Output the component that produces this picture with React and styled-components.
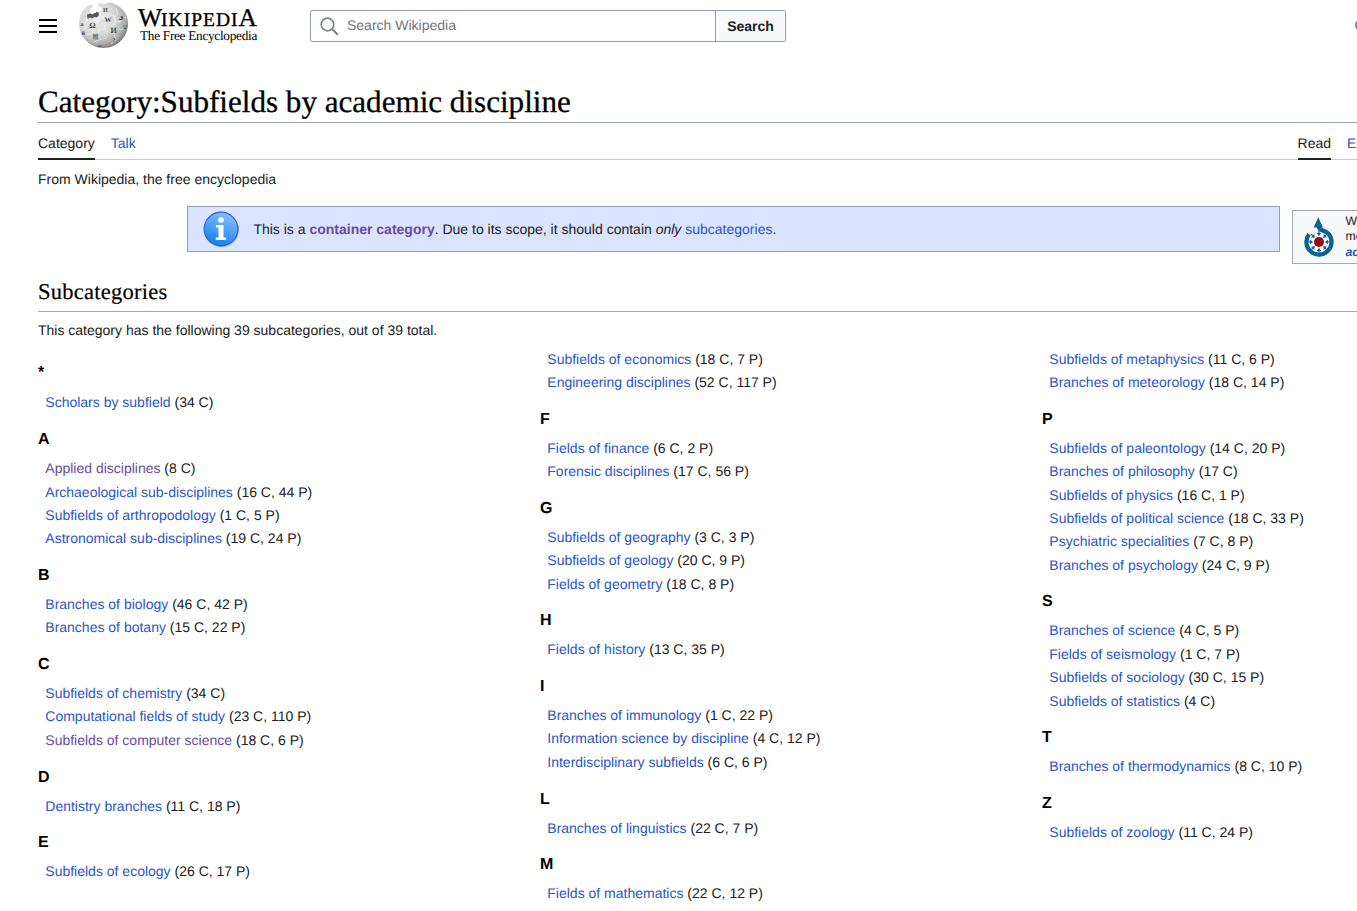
import React from "react";
import styled, { createGlobalStyle } from "styled-components";

const GlobalStyle = createGlobalStyle`
  * { box-sizing: border-box; }
  body {
    margin: 0;
    background: #fff;
    color: #202122;
    font: 14px/23.4px "Liberation Sans", Arial, sans-serif;
    text-rendering: geometricPrecision;
    overflow: hidden;
  }
`;

const Page = styled.div`
  width: 1357px;
  height: 911px;
  overflow: hidden;
  padding-left: 38px;
`;

const Header = styled.header`
  display: flex;
  align-items: flex-start;
  height: 82px;
`;

const MenuIcon = styled.svg`
  margin: 18px 20px 0 0;
  flex: none;
`;

const LogoLink = styled.div`
  display: flex;
  flex: none;
  width: 232px;
  color: #000;
`;

const Wordmark = styled.div`
  margin: 7px 0 0 9px;
  font-family: "Liberation Serif", serif;
  white-space: nowrap;
`;

const LogoTitle = styled.div`
  font-size: 19.5px;
  line-height: 21px;
  height: 21px;
  letter-spacing: 1px;
  -webkit-text-stroke: 0.35px #000;
`;

const LargeLetter = styled.span`
  font-size: 25.5px;
  letter-spacing: ${(p) => p.$tight || "0"};
`;

const Tagline = styled.div`
  font-size: 13.3px;
  line-height: 16px;
  margin-left: 2px;
  letter-spacing: -0.3px;
`;

const SearchForm = styled.div`
  display: flex;
  flex: none;
  width: 476px;
  height: 32px;
  margin-top: 10px;
  border: 1px solid #949bab;
  border-radius: 2px;
`;

const SearchField = styled.div`
  display: flex;
  flex: 1;
  align-items: center;
  padding: 0 0 2px 9px;
  gap: 8px;
  color: #72777d;
  line-height: 28px;

  svg { margin-top: 3px; }
`;

const SearchButton = styled.div`
  width: 70px;
  border-left: 1px solid #949bab;
  background: #f8f9fa;
  text-align: center;
  font-weight: 700;
  line-height: 31px;
`;

const UserLink = styled.span`
  flex: none;
  margin: 14px 0 0 568.5px;
  color: #3366cc;
  white-space: nowrap;
`;

const Title = styled.h1`
  margin: 0;
  height: 41px;
  border-bottom: 1px solid #a2a9b1;
  color: #000;
  font: 400 31.1px/40px "Liberation Serif", serif;
  -webkit-text-stroke: 0.3px #000;
`;

const TabBar = styled.nav`
  display: flex;
  height: 37px;
  border-bottom: 1px solid #c8ccd1;
`;

const Tab = styled.span`
  height: 37px;
  margin-right: 16px;
  line-height: 41px;
  white-space: nowrap;
  color: ${(p) => (p.$active ? "#202122" : "#2a56c6")};
  border-bottom: ${(p) => (p.$active ? "2px solid #202122" : "0")};
  margin-left: ${(p) => (p.$push ? "auto" : "0")};
  ${(p) => p.$clip && "width: 10px; margin-right: 0;"}
`;

const SiteSub = styled.div`
  padding-top: 8px;
  height: 46px;
`;

const Notices = styled.div`
  display: flex;
  height: 66px;
  padding-left: 149px;
  gap: 12px;
`;

const ContainerNotice = styled.div`
  display: flex;
  align-items: center;
  flex: none;
  width: 1093px;
  height: 46px;
  padding-left: 15px;
  border: 1px solid #949fb0;
  background: #dbe4ff;

  svg { margin-right: 12.4px; }
  span { padding-top: 1px; }
`;

const CommonsNotice = styled.div`
  display: flex;
  flex: none;
  width: 238px;
  height: 54px;
  margin-top: 4px;
  padding: 2.600px 0 0 10px;
  border: 1px solid #a2a9b1;
  background: #f8f9fa;
  font-size: 12.3px;
  line-height: 15.5px;
`;

const CommonsText = styled.div`
  padding-left: 10.4px;
  white-space: nowrap;
`;

const Link = styled.a`
  color: ${(p) => (p.$visited ? "#6b4ba1" : "#2a56c6")};
  font-weight: ${(p) => (p.$bold ? 700 : "inherit")};
  font-style: ${(p) => (p.$italic ? "italic" : "inherit")};
`;

const SectionTitle = styled.h2`
  margin: 0;
  height: 40px;
  padding-top: 5px;
  border-bottom: 1px solid #a2a9b1;
  color: #000;
  font: 400 22.5px/30px "Liberation Serif", serif;
  letter-spacing: 0.25px;
  -webkit-text-stroke: 0.2px #000;
`;

const Summary = styled.p`
  margin: 0;
  padding-top: 7px;
  height: 35.5px;
`;

const Columns = styled.div`
  display: flex;
`;

const Column = styled.div`
  flex: none;
  width: 502px;
  padding-top: ${(p) => (p.$first ? "1.65px" : "0.25px")};
`;

const Letter = styled.h3`
  margin: 0;
  height: 42.3px;
  padding-top: ${(p) => (p.$raised ? "13px" : "14.3px")};
  color: #000;
  font-size: 16px;
  line-height: 22px;
`;

const Item = styled.div`
  padding-left: 7.3px;
  height: 23.4px;
  white-space: nowrap;
`;

const columns = [
  [
    ["*", [["Scholars by subfield", "34 C"]]],
    ["A", [["Applied disciplines", "8 C", true], ["Archaeological sub-disciplines", "16 C, 44 P"], ["Subfields of arthropodology", "1 C, 5 P"], ["Astronomical sub-disciplines", "19 C, 24 P"]]],
    ["B", [["Branches of biology", "46 C, 42 P"], ["Branches of botany", "15 C, 22 P"]]],
    ["C", [["Subfields of chemistry", "34 C"], ["Computational fields of study", "23 C, 110 P"], ["Subfields of computer science", "18 C, 6 P", true]]],
    ["D", [["Dentistry branches", "11 C, 18 P"]]],
    ["E", [["Subfields of ecology", "26 C, 17 P"]]],
  ],
  [
    [null, [["Subfields of economics", "18 C, 7 P"], ["Engineering disciplines", "52 C, 117 P"]]],
    ["F", [["Fields of finance", "6 C, 2 P"], ["Forensic disciplines", "17 C, 56 P"]]],
    ["G", [["Subfields of geography", "3 C, 3 P"], ["Subfields of geology", "20 C, 9 P"], ["Fields of geometry", "18 C, 8 P"]]],
    ["H", [["Fields of history", "13 C, 35 P"]]],
    ["I", [["Branches of immunology", "1 C, 22 P"], ["Information science by discipline", "4 C, 12 P"], ["Interdisciplinary subfields", "6 C, 6 P"]]],
    ["L", [["Branches of linguistics", "22 C, 7 P"]]],
    ["M", [["Fields of mathematics", "22 C, 12 P"]]],
  ],
  [
    [null, [["Subfields of metaphysics", "11 C, 6 P"], ["Branches of meteorology", "18 C, 14 P"]]],
    ["P", [["Subfields of paleontology", "14 C, 20 P"], ["Branches of philosophy", "17 C"], ["Subfields of physics", "16 C, 1 P"], ["Subfields of political science", "18 C, 33 P"], ["Psychiatric specialities", "7 C, 8 P"], ["Branches of psychology", "24 C, 9 P"]]],
    ["S", [["Branches of science", "4 C, 5 P"], ["Fields of seismology", "1 C, 7 P"], ["Subfields of sociology", "30 C, 15 P"], ["Subfields of statistics", "4 C"]]],
    ["T", [["Branches of thermodynamics", "8 C, 10 P"]]],
    ["Z", [["Subfields of zoology", "11 C, 24 P"]]],
  ],
];

const Globe = () => (
  <svg width="51" height="50" viewBox="0 0 51 50">
    <defs>
      <radialGradient id="globe" cx="38%" cy="35%" r="68%">
        <stop offset="0" stopColor="#f0f0f0" />
        <stop offset="0.55" stopColor="#d6d6d6" />
        <stop offset="0.85" stopColor="#a9a9a9" />
        <stop offset="1" stopColor="#777" />
      </radialGradient>
    </defs>
    <path d="M11.500 5l2.500-.5 1 2.500-3 2 .5 4.500h8l1.500-3 2-.5-1-3-3-1 .5-2.500 3-.5 2 1.200L28 3l4-.5C43 5 50 13.500 50 23.500 50 37 39 48 25.500 48S1 37 1 23.500C1 15.500 5.500 8.500 11.500 5z" fill="url(#globe)" />
    <path d="M9 14.500l3.500-1 2 1 2-1.500 1.500-.5.5-1 2.500 1.500-.5 3-2 1.500-2-.5-2.500 1.500-2-1-2.500 1.500z" fill="#5a5a5a" />
    <path d="M3 15l5 1 1 5-3 2 2 5-5 1M8 28l7-1 1-4 5 1 2-4 6 1 1-7-3-2 1-4M9 35l6-2-1-5M15 33l5 2 1-5 6-1-1-5 3-3M20 35l1 5-5 2M21 40l8-2 1-5 6 1 2-5-3-3 3-5-2-4 4-3-2-6M30 33l-3-4M36 34l2 6-5 4M38 29l6 1 3-4M36 21l6 1 2-5 4 1M30 14l6 2" fill="none" stroke="#f4f4f4" strokeWidth="0.7" />
    <path d="M3.500 15.500l5 1M8.500 28.500l7-1M21.500 24.500l2-4 6 1M15.500 33.500l5 2M21.500 40.500l8-2 1-5 6 1M38.500 29.500l6 1" fill="none" stroke="#aaa" strokeWidth="0.5" />
    <g fill="#484848" fontFamily="Liberation Serif" fontWeight="700">
      <text x="11.300" y="28" fontSize="8">Ω</text>
      <text x="26.500" y="21.500" fontSize="7">W</text>
      <text x="32.500" y="33" fontSize="8">И</text>
      <text x="14.500" y="39" fontSize="6.500" fontFamily="Noto Sans CJK JP" fontWeight="400">維</text>
      <text x="25" y="12" fontSize="6">И</text>
      <text x="42" y="18" fontSize="7" transform="rotate(15 42 18)">و</text>
      <text x="2.500" y="26" fontSize="6">a</text>
      <text x="3.500" y="35" fontSize="6">й</text>
      <text x="34.500" y="42" fontSize="6">?</text>
      <text x="20" y="47" fontSize="5">ω</text>
      <text x="45" y="29" fontSize="6">ש</text>
    </g>
  </svg>
);

const InfoIcon = () => (
  <svg width="38" height="38" viewBox="0 0 38 38">
    <defs>
      <linearGradient id="info" x1="0.7" y1="0" x2="0.35" y2="1">
        <stop offset="0" stopColor="#84bdfb" />
        <stop offset="0.5" stopColor="#4fa1f6" />
        <stop offset="1" stopColor="#127de9" />
      </linearGradient>
    </defs>
    <circle cx="18.800" cy="20" r="17.300" fill="#8b9dbd" opacity="0.65" />
    <circle cx="18" cy="19" r="16.900" fill="url(#info)" stroke="#2b62c8" strokeWidth="1.100" />
    <circle cx="18" cy="10" r="2.800" fill="#fff" />
    <path d="M13 15h7.500v12.500H23V30H12.800v-2.500h2.700v-10H13z" fill="#fff" />
  </svg>
);

const CommonsIcon = () => (
  <svg width="32" height="44" viewBox="0 0 32 44">
    <path d="M6 20.300A12.600 12.600 0 1 0 25.300 19.500C21 15.800 15.300 17 15.300 11" fill="none" stroke="#0b6296" strokeWidth="4.200" />
    <path d="M15.300 3.200L20 13.800l-4.500-1-5 1z" fill="#0b6296" />
    <circle cx="16" cy="28" r="5" fill="#990714" />
    <g fill="#0b6296">
      {[-45, 0, 45, 90, 135, 180, 225, 270].map((a) => (
        <path key={a} d="M15.400 16.500h1.200v2.500h1.700L16 22l-2.300-3h1.700z" transform={`rotate(${a} 16 28)`} />
      ))}
    </g>
  </svg>
);

export default function App() {
  return (
    <Page>
      <GlobalStyle />
      <Header>
        <MenuIcon width="20" height="16" viewBox="0 0 20 16">
          <path d="M1 1h18v2H1zM1 7h18v2H1zM1 13h18v2H1z" fill="#000" />
        </MenuIcon>
        <LogoLink>
          <Globe />
          <Wordmark>
            <LogoTitle>
              <LargeLetter $tight="-1px">W</LargeLetter>IKIPEDI<LargeLetter>A</LargeLetter>
            </LogoTitle>
            <Tagline>The Free Encyclopedia</Tagline>
          </Wordmark>
        </LogoLink>
        <SearchForm>
          <SearchField>
            <svg width="19" height="19" viewBox="0 0 19 19" fill="none" stroke="#808387">
              <circle cx="7.500" cy="7.500" r="6.300" strokeWidth="1.700" />
              <path d="M12 12l5.800 5.800" strokeWidth="2" />
            </svg>
            Search Wikipedia
          </SearchField>
          <SearchButton>Search</SearchButton>
        </SearchForm>
        <UserLink>Create account</UserLink>
      </Header>
      <Title>Category:Subfields by academic discipline</Title>
      <TabBar>
        <Tab $active>Category</Tab>
        <Tab>Talk</Tab>
        <Tab $active $push>Read</Tab>
        <Tab $clip>Edit</Tab>
      </TabBar>
      <SiteSub>From Wikipedia, the free encyclopedia</SiteSub>
      <Notices>
        <ContainerNotice>
          <InfoIcon />
          <span>
            This is a <Link $visited $bold>container category</Link>. Due to its scope, it should contain <i>only</i> <Link>subcategories</Link>.
          </span>
        </ContainerNotice>
        <CommonsNotice>
          <CommonsIcon />
          <CommonsText>
            Wikimedia Commons has<br />media related to<br />
            <Link $bold $italic>academic disciplines</Link>
          </CommonsText>
        </CommonsNotice>
      </Notices>
      <SectionTitle>Subcategories</SectionTitle>
      <Summary>This category has the following 39 subcategories, out of 39 total.</Summary>
      <Columns>
        {columns.map((groups, i) => (
          <Column key={i} $first={i === 0}>
            {groups.map(([letter, items]) => (
              <React.Fragment key={letter || "top"}>
                {letter && <Letter $raised={letter === "*"}>{letter}</Letter>}
                {items.map(([name, count, visited]) => (
                  <Item key={name}>
                    <Link $visited={visited}>{name}</Link> ({count})
                  </Item>
                ))}
              </React.Fragment>
            ))}
          </Column>
        ))}
      </Columns>
    </Page>
  );
}
